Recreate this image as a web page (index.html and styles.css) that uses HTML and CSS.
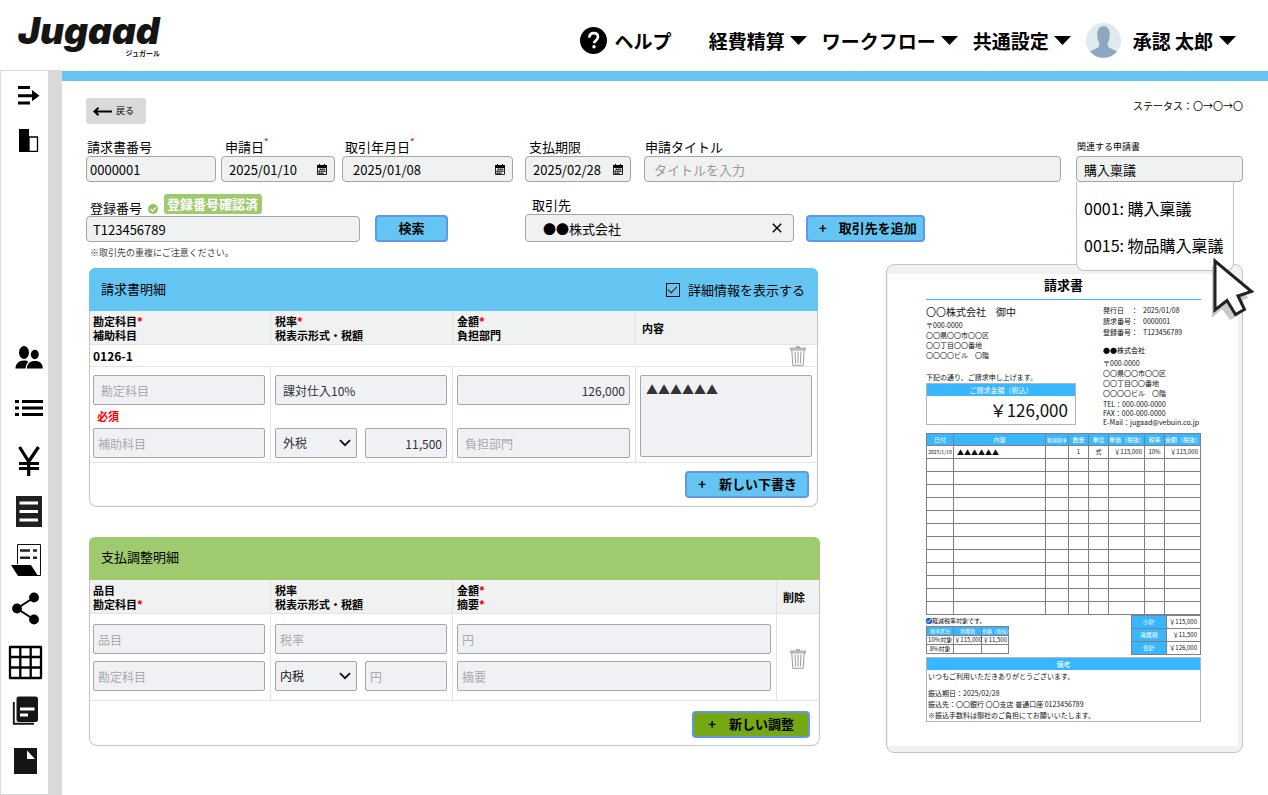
FILE: index.html
```html
<!DOCTYPE html>
<html lang="ja">
<head>
<meta charset="utf-8">
<meta name="viewport" content="width=device-width, initial-scale=1">
<title>Jugaad 請求書</title>
<link rel="stylesheet" href="styles.css">
</head>
<body>
<svg class="sprite" aria-hidden="true">
  <symbol id="caret" viewBox="0 0 17 9"><path d="M0 0h17L8.500 9z"/></symbol>
  <symbol id="calendar" viewBox="0 0 10 11"><path d="M0 1h2V0h1v1h4V0h1v1h2v3H0z"/><path d="M.5 4v6.500h9V4" fill="none" stroke="#222"/><path d="M2.500 5.300h6M1.500 7.300h7M1.500 9.200h5" stroke="#111" stroke-width="1.400" stroke-dasharray="1.500 .4"/></symbol>
  <symbol id="trash" viewBox="0 0 16 20"><path d="M.5 2h15v2H.5zM6.500 2V.600h3V2" fill="#ccc" stroke="#999" stroke-width=".8"/><path d="M1.800 4l1 15.300h10.400l1-15.300M5 5.500l.6 12M8 5.500v12M11 5.500l-.6 12" fill="none" stroke="#999"/></symbol>
  <symbol id="chevron" viewBox="0 0 12 8"><path d="M1 1.200l5 5 5-5" fill="none" stroke="#111" stroke-width="1.800"/></symbol>
</svg>

<header class="header">
  <a class="logo" href="#"><span class="logo-name">Jugaad</span><span class="logo-kana">ジュガール</span></a>
  <nav class="topnav" aria-label="メインメニュー">
    <a class="help" href="#"><svg width="27" height="27" viewBox="0 0 27 27" aria-hidden="true"><circle cx="13.500" cy="13.500" r="13.500"/><path d="M9.300 10.700c.2-3 2-4.500 4.400-4.500 2.500 0 4.300 1.500 4.300 3.800 0 1.800-1 2.700-2.200 3.600-1.200.9-1.600 1.300-1.600 2.700" fill="none" stroke="#fff" stroke-width="2.700"/><circle cx="14" cy="19.700" r="1.700" fill="#fff"/></svg>ヘルプ</a>
    <button class="menu" type="button">経費精算<svg class="caret" aria-hidden="true"><use href="#caret"/></svg></button>
    <button class="menu" type="button">ワークフロー<svg class="caret" aria-hidden="true"><use href="#caret"/></svg></button>
    <button class="menu" type="button">共通設定<svg class="caret" aria-hidden="true"><use href="#caret"/></svg></button>
    <button class="menu user" type="button"><svg class="avatar" viewBox="0 0 35 35" aria-hidden="true"><circle cx="17.500" cy="17.500" r="17.500" fill="#dfeaef"/><path d="M17.500 3.200c4.400 0 6.300 3.700 6.300 8.300 0 3.300-.7 6-2 7.900-.4 3.200 0 4.700 2 5.500l7.200 3.600a17.500 17.500 0 0 1-27 0l7.200-3.600c2-.8 2.400-2.300 2-5.500-1.300-1.900-2-4.600-2-7.900 0-4.600 1.900-8.300 6.300-8.300z" fill="#8ba7c1"/></svg>承認 太郎<svg class="caret" aria-hidden="true"><use href="#caret"/></svg></button>
  </nav>
</header>

<div class="shell">
  <nav class="sidebar" aria-label="サイドメニュー">
    <a href="#" aria-label="メニューを開く"><svg viewBox="0 71 48 50"><path d="M18 86h12v3H18zM18 94.300h14v-4.300l7.500 5.700-7.500 5.500v-4H18zM18 101.500h12v3H18z"/></svg></a>
    <a href="#" aria-label="分割表示"><svg viewBox="0 121 48 50"><path d="M19 129h10v23H19z"/><path d="M29 137h8.500v14.300H29z" fill="#fff" stroke="#000" stroke-width="1.300"/></svg></a>
    <a class="push" href="#" aria-label="ユーザー"><svg viewBox="0 333 48 50"><ellipse cx="24" cy="352.500" rx="5" ry="6.500"/><ellipse cx="34.800" cy="354.500" rx="4" ry="4.700"/><path d="M15.500 368.500c0-5 3.500-8 8.500-8 2 0 3.500.4 4.500 1.300-1.700 1.700-2.800 3.700-2.900 6.700zM27 368.500c0-5 3-7.500 8-7.500s7.800 2.500 7.800 7.500z"/></svg></a>
    <a href="#" aria-label="一覧"><svg viewBox="0 383 48 50"><path d="M15 400h4v3h-4zM22 400h21v3H22zM15 406.500h4v3h-4zM22 406.500h21v3H22zM15 413h4v3h-4zM22 413h21v3H22z"/></svg></a>
    <a href="#" aria-label="支払"><svg viewBox="0 433 48 50"><path d="M19.500 447l9.200 14.500L38.500 447M28.700 461v15M19 463.500h20M19 468.500h20" fill="none" stroke="#000" stroke-width="3.200"/></svg></a>
    <a href="#" aria-label="台帳"><svg viewBox="0 483 48 50"><path d="M16 496h26v31H16z" fill="#231f20"/><path d="M19.500 503H38M19.500 511.500H38M19.500 520H38" stroke="#fff" stroke-width="2.800"/></svg></a>
    <a href="#" aria-label="伝票"><svg viewBox="0 533 48 50"><path d="M17.500 564v-19.500h23v31H28" fill="#fff" stroke="#111"/><path d="M11 565h20l7 11H18z"/><path d="M20 550.500h10m3 0h4M20 557.700h10m3 0h4" stroke="#222" stroke-width="2.400"/></svg></a>
    <a href="#" aria-label="共有"><svg viewBox="0 583 48 50"><path d="M34 597.500l-17 11 17 11" fill="none" stroke="#000" stroke-width="2"/><circle cx="34" cy="597.500" r="4.900"/><circle cx="17" cy="608.500" r="4.900"/><circle cx="34" cy="619.500" r="4.900"/></svg></a>
    <a href="#" aria-label="表"><svg viewBox="0 633 48 50"><path d="M10 647h31v31H10zM20.300 647v31M30.700 647v31M10 657h31M10 667.500h31" fill="none" stroke="#000" stroke-width="2.300" stroke-linejoin="round"/></svg></a>
    <a href="#" aria-label="書類"><svg viewBox="0 683 48 50"><rect x="16.500" y="696.500" width="21.500" height="25.500" rx="2.500" fill="#151515"/><path d="M13.800 702v21.800H34" fill="none" stroke="#151515" stroke-width="1.900"/><path d="M20 709h14.500M20 715h8" stroke="#fff" stroke-width="2.800"/></svg></a>
    <a href="#" aria-label="ファイル"><svg viewBox="0 733 48 50"><path d="M14 748h23v26H14z" fill="#151515"/><path d="M27 750.500l8 8.500h-8z" fill="#fff"/></svg></a>
  </nav>

  <main class="main">
    <div class="toprow">
      <button class="back" type="button"><svg width="19" height="9" viewBox="0 0 19 9" aria-hidden="true"><path d="M19 4.500H2M5.500.8L1.500 4.500l4 3.700" fill="none" stroke="#000" stroke-width="2"/></svg>戻る</button>
      <p class="status">ステータス：〇→〇→〇</p>
    </div>

    <div class="fields">
      <div class="field f-number"><label for="number">請求書番号</label><div class="control"><input id="number" type="text" value="0000001"></div></div>
      <div class="field f-applied"><label for="applied">申請日<sup>*</sup></label><div class="control"><input id="applied" type="text" value="2025/01/10"><button type="button" aria-label="申請日を選択"><svg class="cal"><use href="#calendar"/></svg></button></div></div>
      <div class="field f-traded"><label for="traded">取引年月日<sup>*</sup></label><div class="control"><input id="traded" type="text" value="2025/01/08"><button type="button" aria-label="取引年月日を選択"><svg class="cal"><use href="#calendar"/></svg></button></div></div>
      <div class="field f-due"><label for="due">支払期限</label><div class="control"><input id="due" type="text" value="2025/02/28"><button type="button" aria-label="支払期限を選択"><svg class="cal"><use href="#calendar"/></svg></button></div></div>
      <div class="field f-title"><label for="title">申請タイトル</label><div class="control"><input id="title" type="text" placeholder="タイトルを入力"></div></div>
      <div class="field f-related">
        <label class="small" for="related">関連する申請書</label>
        <div class="control"><input id="related" type="text" role="combobox" aria-expanded="true" aria-controls="related-list" value="購入稟議"></div>
        <ul class="options" id="related-list" role="listbox">
          <li role="option" aria-selected="false">0001: 購入稟議</li>
          <li role="option" aria-selected="true">0015: 物品購入稟議</li>
        </ul>
        <svg class="cursor" width="46" height="64" viewBox="0 0 46 64" aria-hidden="true"><path d="M0 7v53l10-9 8 11 9-5-6-13 16-4z" fill="#bbb" opacity=".8"/><path d="M3 3v49l12-9.500 8.500 14 9-5-6.500-13.500 13.500-4.500z" fill="#fff" stroke="#222" stroke-width="3"/></svg>
      </div>
    </div>

    <div class="fields second">
      <div class="field f-reg">
        <div class="reg-head"><label for="reg">登録番号</label><svg class="ok" viewBox="0 0 10 10" aria-hidden="true"><circle cx="5" cy="5" r="5" fill="#8fc65a"/><path d="M2.500 5l2 2 3.300-3.500" fill="none" stroke="#fff" stroke-width="1.300"/></svg><span class="badge">登録番号確認済</span></div>
        <div class="control"><input id="reg" type="text" value="T123456789"></div>
      </div>
      <button class="btn search" type="button">検索</button>
      <div class="field f-partner"><label for="partner">取引先</label><div class="control"><input id="partner" type="text" value="●●株式会社"><button type="button" aria-label="クリア"><svg width="10" height="10" viewBox="0 0 10 10"><path d="M.8.8l8.400 8.400M9.200.8L.8 9.200" stroke="#000" stroke-width="1.500"/></svg></button></div></div>
      <button class="btn add" type="button"><span>+</span>取引先を追加</button>
    </div>
    <p class="note">※取引先の重複にご注意ください。</p>

    <div class="columns">
      <div class="panels">
        <section class="panel blue">
          <div class="panel-head"><h2>請求書明細</h2><label class="detail"><input type="checkbox" checked>詳細情報を表示する</label></div>
          <table class="lines">
            <colgroup><col class="c-a"><col class="c-b"><col class="c-c"><col></colgroup>
            <thead><tr><th>勘定科目<b>*</b><br>補助科目</th><th>税率<b>*</b><br>税表示形式・税額</th><th>金額<b>*</b><br>負担部門</th><th>内容</th></tr></thead>
            <tbody>
              <tr class="id-row"><td colspan="4"><div class="id-line"><strong>0126-1</strong><button class="icon-btn" type="button" aria-label="削除"><svg class="trash"><use href="#trash"/></svg></button></div></td></tr>
              <tr class="edit">
                <td><input type="text" placeholder="勘定科目" aria-label="勘定科目"><div class="error">必須</div><input class="tight" type="text" placeholder="補助科目" aria-label="補助科目"></td>
                <td><input type="text" value="課対仕入10%" aria-label="税率"><div class="error"></div><div class="pair"><div class="select"><select aria-label="税表示形式"><option>外税</option></select><svg><use href="#chevron"/></svg></div><input class="num" type="text" value="11,500" aria-label="税額"></div></td>
                <td><input class="num" type="text" value="126,000" aria-label="金額"><div class="error"></div><input type="text" placeholder="負担部門" aria-label="負担部門"></td>
                <td><textarea aria-label="内容">▲▲▲▲▲▲</textarea></td>
              </tr>
            </tbody>
          </table>
          <div class="panel-foot"><button class="btn" type="button"><span>+</span>新しい下書き</button></div>
        </section>

        <section class="panel green">
          <div class="panel-head"><h2>支払調整明細</h2></div>
          <table class="lines">
            <colgroup><col class="c-a"><col class="c-b"><col><col class="c-del"></colgroup>
            <thead><tr><th>品目<br>勘定科目<b>*</b></th><th>税率<br>税表示形式・税額</th><th>金額<b>*</b><br>摘要<b>*</b></th><th>削除</th></tr></thead>
            <tbody>
              <tr class="adjust">
                <td><div class="stack"><input class="tight" type="text" placeholder="品目" aria-label="品目"><input class="tight" type="text" placeholder="勘定科目" aria-label="勘定科目"></div></td>
                <td><div class="stack"><input class="tight" type="text" placeholder="税率" aria-label="税率"><div class="pair"><div class="select dark"><select aria-label="税表示形式"><option>内税</option></select><svg><use href="#chevron"/></svg></div><input class="tight" type="text" placeholder="円" aria-label="税額"></div></div></td>
                <td><div class="stack"><input class="tight" type="text" placeholder="円" aria-label="金額"><input class="tight" type="text" placeholder="摘要" aria-label="摘要"></div></td>
                <td class="del"><button class="icon-btn" type="button" aria-label="削除"><svg class="trash"><use href="#trash"/></svg></button></td>
              </tr>
            </tbody>
          </table>
          <div class="panel-foot"><button class="btn" type="button"><span>+</span>新しい調整</button></div>
        </section>
      </div>

      <aside class="preview" aria-label="請求書プレビュー">
        <article class="invoice">
          <h2>請求書</h2>
          <div class="parties">
            <div class="to">
              <h3>〇〇株式会社　御中</h3>
              <p>〒000-0000<br>〇〇県〇〇市〇〇区<br>〇〇丁目〇〇番地<br>〇〇〇〇ビル　〇階</p>
              <p class="lead">下記の通り、ご請求申し上げます。</p>
              <div class="amount"><h4>ご請求金額（税込）</h4><p>￥126,000</p></div>
            </div>
            <div class="from">
              <dl><dt>発行日　：</dt><dd>2025/01/08</dd><dt>請求番号：</dt><dd>0000001</dd><dt>登録番号：</dt><dd>T123456789</dd></dl>
              <p class="company">●●株式会社</p>
              <p>〒000-0000<br>〇〇県〇〇市〇〇区<br>〇〇丁目〇〇番地<br>〇〇〇〇ビル　〇階</p>
              <p class="contact">TEL：000-000-0000<br>FAX：000-000-0000<br>E-Mail：jugaad@vebuin.co.jp</p>
            </div>
          </div>
          <table class="items">
            <colgroup><col class="i-date"><col><col class="i-red"><col class="i-s"><col class="i-s"><col class="i-p"><col class="i-s"><col class="i-p"></colgroup>
            <thead><tr><th>日付</th><th>内容</th><th class="tiny">軽減税率</th><th>数量</th><th>単位</th><th>単価（税抜）</th><th>税率</th><th>金額（税抜）</th></tr></thead>
            <tbody>
              <tr><td class="tiny">2025/1/10</td><td class="what">▲▲▲▲▲▲</td><td></td><td>1</td><td>式</td><td class="yen">￥115,000</td><td>10%</td><td class="yen">￥115,000</td></tr>
              <tr><td></td><td></td><td></td><td></td><td></td><td></td><td></td><td></td></tr>
              <tr><td></td><td></td><td></td><td></td><td></td><td></td><td></td><td></td></tr>
              <tr><td></td><td></td><td></td><td></td><td></td><td></td><td></td><td></td></tr>
              <tr><td></td><td></td><td></td><td></td><td></td><td></td><td></td><td></td></tr>
              <tr><td></td><td></td><td></td><td></td><td></td><td></td><td></td><td></td></tr>
              <tr><td></td><td></td><td></td><td></td><td></td><td></td><td></td><td></td></tr>
              <tr><td></td><td></td><td></td><td></td><td></td><td></td><td></td><td></td></tr>
              <tr><td></td><td></td><td></td><td></td><td></td><td></td><td></td><td></td></tr>
              <tr><td></td><td></td><td></td><td></td><td></td><td></td><td></td><td></td></tr>
              <tr><td></td><td></td><td></td><td></td><td></td><td></td><td></td><td></td></tr>
              <tr><td></td><td></td><td></td><td></td><td></td><td></td><td></td><td></td></tr>
              <tr><td></td><td></td><td></td><td></td><td></td><td></td><td></td><td></td></tr>
            </tbody>
          </table>
          <div class="sums">
            <div class="reduced">
              <label><input type="checkbox" checked>軽減税率対象です。</label>
              <table class="rates"><thead><tr><th>税率区分</th><th>消費税</th><th>金額（税抜）</th></tr></thead>
              <tbody><tr><td>10%対象</td><td>￥115,000</td><td>￥11,500</td></tr><tr><td>8%対象</td><td></td><td></td></tr></tbody></table>
            </div>
            <table class="totals"><tbody><tr><th>小計</th><td>￥115,000</td></tr><tr><th>消費税</th><td>￥11,500</td></tr><tr><th>合計</th><td>￥126,000</td></tr></tbody></table>
          </div>
          <div class="remarks"><h4>備考</h4><p>いつもご利用いただきありがとうございます。</p><p class="bank">振込期日：2025/02/28<br>振込先：〇〇銀行 〇〇支店 普通口座 0123456789<br>※振込手数料は御社のご負担にてお願いいたします。</p></div>
        </article>
      </aside>
    </div>
  </main>
</div>
</body>
</html>
```

FILE: styles.css
```css
* { box-sizing: border-box; margin: 0; padding: 0; }

:root {
  --sky: #64c5f2;
  --leaf: #a0ca6e;
  --soft: #f0f2f1;
  --line: #e2e4e3;
  --doc: #38b6ff;
  --doc-line: #808085;
}

body {
  display: flex;
  flex-direction: column;
  min-height: 100vh;
  background: #fff;
  color: #000;
  font-family: "Noto Sans CJK JP", "Noto Sans", sans-serif;
  font-size: 13px;
  line-height: 18px;
}

button, input, select, textarea { font: inherit; color: inherit; }
button { border: 0; background: none; cursor: pointer; }
a { color: inherit; text-decoration: none; }
h2, h3, h4 { font-weight: 400; font-size: inherit; }
.sprite { position: absolute; width: 0; height: 0; }

/* Header */
.header { display: flex; justify-content: space-between; height: 70px; padding: 0 32px 0 18px; }
.logo { display: flex; flex-direction: column; width: 142px; padding-top: 15px; color: #151515; }
.logo-name { font: italic 900 37px/32px Inter, sans-serif; white-space: nowrap; }
.logo-kana { align-self: flex-end; font-size: 7px; font-weight: 700; line-height: 12px; }
.topnav { display: flex; align-items: center; gap: 15px; padding-top: 11px; font-size: 19px; font-weight: 700; line-height: 28px; white-space: nowrap; }
.help { display: flex; align-items: center; gap: 8px; margin-right: 22px; }
.menu { display: flex; align-items: center; gap: 5px; }
.caret { width: 17px; height: 9px; }
.user { gap: 6px; }
.avatar { width: 35px; height: 35px; margin-right: 6px; }

/* Sidebar */
.shell { display: flex; flex: 1; }
.sidebar { display: flex; flex-direction: column; flex: none; width: 62px; padding-bottom: 11px; border: 1px solid #d9d9d9; border-right: 14px solid #d9d9d9; }
.sidebar a { display: block; width: 47px; height: 50px; }
.sidebar svg { display: block; width: 48px; height: 50px; margin-left: -1px; }
.sidebar .push { margin-top: auto; }

/* Main */
.main { flex: 1; min-width: 0; margin-top: 1px; padding: 17px 25px 40px 24px; border-top: 10px solid #66c5f2; }
.toprow { display: flex; justify-content: space-between; }
.back { display: flex; align-items: center; gap: 4px; height: 26px; padding: 0 12px 0 7px; border-radius: 3px; background: #d9d9d9; font-size: 9px; }
.status { font-size: 10px; line-height: 15px; }

.fields { display: flex; align-items: flex-end; margin-top: 14px; }
.fields.second { margin-top: 12px; }
.field { display: flex; flex-direction: column; position: relative; }
.field label { padding-left: 1px; }
.field label.small { font-size: 9px; }
.field sup { position: relative; top: -1px; color: #f00; font-size: 10px; line-height: 0; }
.control { display: flex; align-items: center; height: 26px; padding: 0 7px; border: 1px solid #a5a5a8; border-radius: 4px; background: var(--soft); }
.control input { flex: 1; width: 100%; min-width: 0; border: 0; outline: 0; background: none; height: 20px; }
.control button { display: flex; flex: none; }
.control ::placeholder { color: #999; }
.cal { width: 10px; height: 11px; }
.f-number { width: 130px; }
.f-number .control { padding: 0 3px; }
.f-applied { width: 114px; margin-left: 5px; }
.f-applied label, .f-due label { padding-left: 4px; }
.f-traded { width: 171px; margin-left: 7px; }
.f-traded label { padding-left: 3px; }
.f-traded .control { padding-left: 10px; }
.f-due { width: 106px; margin-left: 12px; }
.f-title { flex: 1; min-width: 0; margin-left: 13px; }
.f-title .control { padding-left: 9px; }
.f-related { width: 167px; margin-left: 15px; }
.f-reg { width: 274px; }
.f-reg .control { padding: 0 6px; }
.f-partner { width: 269px; margin-left: 77px; }
.f-partner .control { height: 28px; padding: 0 11px 0 17px; }
.f-partner label { padding-left: 7px; }

.reg-head { display: flex; align-items: flex-end; height: 22px; }
.reg-head label { padding-left: 4px; line-height: 17px; }
.ok { width: 10px; height: 10px; margin: 0 6px 2px; }
.badge { align-self: flex-start; height: 20px; padding: 0 4px 0 3px; border-radius: 3px; background: var(--leaf); color: #fff; font-weight: 700; line-height: 20px; }

.btn { display: flex; align-items: center; justify-content: center; gap: 13px; height: 27px; padding: 0 8px 1px 11px; border: 2px solid #6495ed; border-radius: 4px; background: var(--sky); font-weight: 700; line-height: 20px; white-space: nowrap; }
.fields .btn { margin-left: 12px; }
.fields .add { gap: 12px; padding-right: 6px; }
.fields .search { width: 73px; margin-left: 15px; padding: 0 0 1px; }

.options { position: absolute; z-index: 2; top: 44px; left: 0; width: 158px; padding: 8px 0 6px; border: 1px solid #c4c4c4; border-top: 0; border-radius: 0 0 8px 8px; background: #fff; list-style: none; }
.options li { padding-left: 7px; font-size: 16px; line-height: 37px; white-space: nowrap; }
.cursor { position: absolute; z-index: 3; top: 120px; left: 136px; }

.note { padding-left: 4px; color: #444; font-size: 9px; line-height: 22px; }

.columns { display: flex; align-items: flex-start; justify-content: space-between; gap: 24px; }
.panels { display: flex; flex: 0 1 734px; flex-direction: column; gap: 30px; padding: 4px 0 0 3px; }

/* Detail panels */
.panel { border: 1px solid #c4c4c4; border-top: 0; border-radius: 8px; }
.panel.blue { margin-right: 2px; }
.panel-head { display: flex; align-items: center; justify-content: space-between; height: 43px; margin: 0 -1px; padding: 0 13px 0 12px; border-radius: 6px 6px 0 0; background: var(--sky); }
.panel-head h2 { padding-bottom: 2px; }
.green .panel-head { padding-bottom: 2px; background: var(--leaf); }
.detail { display: flex; align-items: center; gap: 8px; }
.detail input { display: grid; place-items: center; width: 14px; height: 14px; border: 1px solid #111; appearance: none; }
.detail input:checked::after { content: ""; width: 8px; height: 4px; margin-bottom: 2px; border: solid #111; border-width: 0 0 1px 1px; transform: rotate(-45deg); }
.lines { width: 100%; border-spacing: 0; table-layout: fixed; }
.c-a { width: 180px; }
.c-b { width: 182px; }
.c-c { width: 183px; }
.c-del { width: 43px; }
.lines th { height: 34px; padding: 0 4px; border-bottom: 1px solid var(--line); background: var(--soft); font-size: 11px; line-height: 14px; text-align: left; }
.lines th + th, .lines td + td { border-left: 1px solid var(--line); }
.lines th:last-child { padding-left: 6px; }
.lines b { color: #f00; }
.lines td { padding: 0 5px 0 4px; border-bottom: 1px solid var(--line); vertical-align: top; }
.lines th:first-child, .lines td:first-child { padding-left: 3px; }
.id-row { height: 22px; }
.id-line { display: flex; align-items: center; justify-content: space-between; height: 21px; padding-right: 6px; font-size: 12px; }
.icon-btn { display: inline-flex; }
.trash { width: 16px; height: 20px; }
.edit { height: 96px; }
.lines .edit td { padding-top: 8px; padding-bottom: 4px; }
.lines input, .lines select, .lines textarea { display: block; width: 100%; min-width: 0; height: 30px; padding: 0 7px; border: 1px solid #a5a5aa; border-radius: 2px; background: #f0f1f5; color: #333; font-size: 12px; }
.lines ::placeholder { color: #aaa; }
.lines input.tight { padding: 0 4px; }
.lines input.num { padding: 0 4px; text-align: right; }
.lines textarea { height: 82px; padding: 5px; line-height: 18px; resize: none; }
.error { height: 23px; padding-left: 4px; color: #f00; font-size: 11px; font-weight: 700; line-height: 23px; }
.pair { display: grid; grid-template-columns: 1fr 1fr; gap: 8px; }
.select { display: grid; align-items: center; }
.select > * { grid-area: 1 / 1; }
.select select { appearance: none; }
.select svg { justify-self: end; width: 12px; height: 8px; margin-right: 6px; pointer-events: none; }
.select.dark select { padding: 0 4px; color: #111; }
.stack { display: grid; gap: 7px; padding: 10px 0 9px; }
.lines .adjust .del { padding: 7px 0 0; text-align: center; vertical-align: middle; }
.panel-foot { display: flex; justify-content: flex-end; padding: 8px; }
.panel-foot .btn { padding-right: 10px; }
.green .panel-foot { padding: 10px 9px 7px; }
.green .btn { padding: 0 14px 1px; background: #76a812; }

/* Invoice preview */
.preview { flex: none; width: 357px; padding: 9px 4px 6px 1px; border: 1px solid #c4c4c4; border-radius: 8px; background: var(--soft); }
.invoice { padding: 0 37px 24px 38px; background: #fff; color: #111; font-size: 7px; line-height: 9px; }
.invoice h2 { height: 26px; border-bottom: 1px solid #38b6ff; color: #000; font-size: 13px; font-weight: 700; line-height: 22px; text-align: center; }
.parties { display: flex; justify-content: space-between; height: 133px; }
.to { width: 150px; }
.to h3 { padding-top: 4px; font-size: 10px; line-height: 16px; }
.to p { line-height: 10px; }
.to .lead { padding: 13px 0 1px; line-height: 9px; white-space: nowrap; }
.amount { border: 1px solid #b5b5b8; }
.amount h4, .remarks h4 { background: var(--doc); color: #fff; line-height: 12px; text-align: center; }
.to .amount p { padding-right: 7px; font-size: 17px; line-height: 28px; text-align: right; }
.from { width: 98px; padding-top: 5px; white-space: nowrap; }
.from dl { display: grid; grid-template-columns: 40px 1fr; line-height: 11px; }
.from .company { padding: 7px 0 3px; color: #000; }
.from p { line-height: 10px; }
.from .contact { padding-top: 2px; line-height: 9px; }

.invoice table { border-collapse: collapse; table-layout: fixed; font-size: 6px; line-height: 8px; white-space: nowrap; }
.invoice th, .invoice td { border: 1px solid var(--doc-line); font-weight: 400; text-align: center; }
.invoice th { background: var(--doc); color: #fff; }
.items { width: 100%; }
.items tr, .totals tr { height: 13px; }
.items thead tr { height: 12px; }
.i-date { width: 27px; }
.i-red { width: 23px; }
.i-s { width: 20px; }
.i-p { width: 36px; }
.invoice .tiny { font-size: 5px; }
.invoice .what { padding-left: 3px; font-size: 7px; text-align: left; }
.invoice .yen { padding-right: 2px; text-align: right; }
.sums { display: flex; align-items: flex-start; justify-content: space-between; }
.reduced label { display: flex; align-items: center; height: 11px; font-size: 6px; }
.reduced input { width: 6px; height: 6px; accent-color: #1565b0; }
.rates { width: 83px; }
.rates tr { height: 9px; }
.rates th { font-size: 5px; }
.totals { width: 70px; }
.invoice .totals td { padding-right: 3px; text-align: right; }
.remarks { height: 65px; margin-top: 2px; border: 1px solid #b5b5b8; white-space: nowrap; }
.remarks p { padding: 1px 1px 0; line-height: 11px; }
.remarks .bank { padding-top: 6px; }
```
